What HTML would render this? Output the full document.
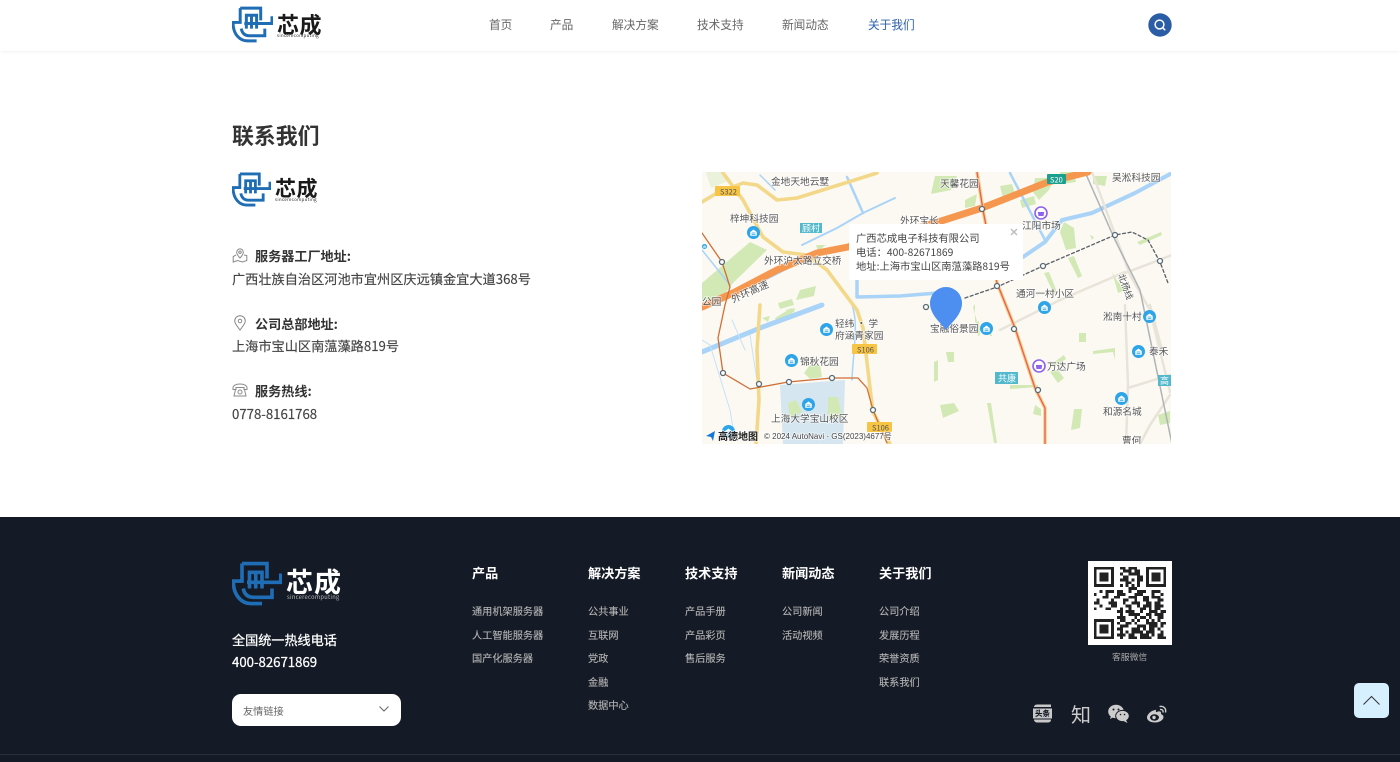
<!DOCTYPE html>
<html lang="zh"><head><meta charset="utf-8"><title>联系我们</title>
<style>
*{margin:0;padding:0;box-sizing:border-box}
html,body{width:1400px;height:762px;overflow:hidden;background:#fff;font-family:"Noto Sans CJK SC","Liberation Sans",sans-serif}
.t{position:absolute;white-space:nowrap;line-height:20px;height:20px}
svg{position:absolute;display:block}
.nav{font-size:11.67px;color:#666}
.lb{font-size:13.12px;font-weight:700;color:#333}
.tx{font-size:13.2px;color:#444;-webkit-text-stroke:.15px #444}
.h{font-size:13.12px;font-weight:700;color:#fff}
.i{font-size:10.2px;color:#b5b5b5;-webkit-text-stroke:.1px #b5b5b5}
svg text{font-family:"Noto Sans CJK SC","Liberation Sans",sans-serif}
.m text{font-size:9.7px;fill:#555;stroke:#fff;stroke-width:1.6px;paint-order:stroke;stroke-opacity:.7}
.m text.b{fill:#fff;stroke:none;font-size:9px}
</style></head><body>
<svg width="0" height="0" style="position:absolute"><defs>
<symbol id="lg" viewBox="0 0 40 36"><path d="M8 2H28V14M8 2V16H1C1 28 8 34 15 34H24M9 22C10 27 13 29 17 29H32V22M14 22V9H24V22M19 9V22M12 17H39V10" fill="none" stroke="currentColor" stroke-width="2.9"/></symbol>
<symbol id="p" viewBox="0 0 14 14"><circle cx="7" cy="7" r="7" fill="#2da5e8"/><path d="M3.5 6.5 7 3.8l3.5 2.7V10.5h-7z" fill="#fff"/><path d="M5 7.5h4M5 9h4" stroke="#2da5e8" stroke-width=".8"/></symbol>
<symbol id="q" viewBox="0 0 14 14"><circle cx="7" cy="7" r="6" fill="#fff" stroke="#8d62ec" stroke-width="1.6"/><path d="M3.8 6h6.4l-.7 4h-5z" fill="#8d62ec"/></symbol>
</defs></svg>

<!-- header -->
<div style="position:absolute;left:0;top:0;width:1400px;height:51px;background:#fff;box-shadow:0 1px 3px rgba(0,0,0,.06)"></div>
<svg style="left:232px;top:6px;color:#1f6db4" width="41" height="37"><use href="#lg"/></svg>
<div class="t" style="left:277px;top:11px;font-size:22px;font-weight:700;color:#1a1a1a;letter-spacing:.5px;line-height:26px;height:26px">芯成</div>
<div class="t" style="left:277px;top:26px;font-size:4.6px;color:#333;letter-spacing:.2px">sincerecomputing</div>
<div class="t nav" style="left:489px;top:15px">首页</div>
<div class="t nav" style="left:550px;top:15px">产品</div>
<div class="t nav" style="left:612px;top:15px">解决方案</div>
<div class="t nav" style="left:697px;top:15px">技术支持</div>
<div class="t nav" style="left:782px;top:15px">新闻动态</div>
<div class="t nav" style="left:868px;top:15px;color:#2d5fa8">关于我们</div>
<svg style="left:1148px;top:13px" width="24" height="24"><circle cx="12" cy="12" r="11.7" fill="#2b5da6"/><circle cx="11.5" cy="11.5" r="4.4" fill="none" stroke="#fff" stroke-width="1.5"/><path d="M14.8 14.8l2.4 2.4" stroke="#fff" stroke-width="1.5"/></svg>

<!-- contact -->
<div class="t" style="left:232px;top:120px;font-size:21.9px;font-weight:700;color:#333;line-height:32px;height:32px">联系我们</div>
<svg style="left:232px;top:172px;color:#1f6db4" width="39" height="35"><use href="#lg"/></svg>
<div class="t" style="left:275px;top:175px;font-size:21px;font-weight:700;color:#1a1a1a;letter-spacing:.5px;line-height:26px;height:26px">芯成</div>
<div class="t" style="left:275px;top:190px;font-size:4.6px;color:#333;letter-spacing:.2px">sincerecomputing</div>

<svg style="left:232px;top:247px" width="16" height="16" fill="none" stroke="#8a8a8a" stroke-width="1"><path d="M8 11C6 9 4.7 7.5 4.7 5.2a3.3 3.3 0 0 1 6.6 0C11.300 7.500 10 9 8 11z"/><circle cx="8" cy="5.200" r="1.200"/><path d="M4 8L1.200 9.500V15L5.500 13.500 10.500 15 14.800 13.500V8.500L12 8"/></svg>
<div class="t lb" style="left:255px;top:246px">服务器工厂地址:</div>
<div class="t tx" style="left:232px;top:269px">广西壮族自治区河池市宜州区庆远镇金宜大道368号</div>

<svg style="left:233px;top:315px" width="14" height="16" fill="none" stroke="#8a8a8a" stroke-width="1"><path d="M7 15C4 11 1.700 8.500 1.700 6a5.300 5.300 0 0 1 10.600 0C12.300 8.500 10 11 7 15z"/><circle cx="7" cy="6" r="1.800"/></svg>
<div class="t lb" style="left:255px;top:314px">公司总部地址:</div>
<div class="t tx" style="left:232px;top:336px">上海市宝山区南蕰藻路819号</div>

<svg style="left:232px;top:383px" width="16" height="14" fill="none" stroke="#8a8a8a" stroke-width="1"><path d="M1 5C1 2.500 4 1 8 1s7 1.500 7 4v1.500h-3V4.500H4v2H1zM3.500 6.500 2 13h12l-1.500-6.500"/><circle cx="8" cy="9" r="2"/></svg>
<div class="t lb" style="left:255px;top:381px">服务热线:</div>
<div class="t tx" style="left:232px;top:404px">0778-8161768</div>

<!-- map -->
<svg class="m" style="left:702px;top:172px" width="469" height="272" viewBox="702 172 469 272">
<rect x="702" y="172" width="469" height="272" fill="#fcf9f3"/>
<path d="M780 385 845 380 843 444H783z" fill="#d5e6f0"/>
<g fill="#d2e9b6">
<path d="M702 283 750 242 767 250 733 283 720 300H702z"/><path d="M705 170h18l8 10-20 8z" opacity=".4"/>
<path d="M775 318l16-10 2 8-16 8zM778 303l14-4 2 6-14 4zM785 310l10-2-1 5z"/>
<path d="M810 365h10l2 12-12 2-6-6z"/><path d="M788 403l8-3 6 12-12 6zM828 397h10l4 20-14 2z"/>
<path d="M935 176h22l-6 14-20 4zM965 200l12-6-2 12-10 2zM1000 186l12-2 3 10-12 4zM1020 200l14-4 2 8-14 4zM1035 178h20l-6 12-10 10-6-8zM1060 172h14l2 10-14 2zM1093 176h14l-2 10-12-2z"/>
<path d="M1064 222l10 6 2 20-10 2-6-18zM1068 258l6-2 8 20-4 2zM1090 235l4 2-2 3z"/>
<path d="M1137 242l24-10 1 3-22 10zM1112 272l6 10 8 8-8 3zM1158 415l12-4v12l-10 2z"/>
<path d="M1044 273l5-1 8 20-3 2zM975 304l-2 3 4 14-2 2zM976 322l3-1 1 14-2 1zM985 322l3 0 4 14-2 0zM1079 333h7v9h-7zM1050 365l14-10 2 4-12 8zM1050 372l8-2 6 8-6 5zM1010 385h28v2l-28 2zM1093 351l22-3v12l-2-8-20 2zM938 360l-4 2 0 20 4-2zM946 352h8v10h-6zM940 405l14-2 5 8-16 7zM987 403l4 0 6 40-3 0zM1035 405l6 4 0 7-8-2zM1074 409h8l-2 19-9 2zM816 245l10 0-8 6zM800 290l16-4-2 10-18 4zM762 318l8-2-2 6z" />
</g>
<g fill="none" stroke="#a9d3f7" stroke-linecap="round" stroke-linejoin="round">
<path d="M702 352 760 328 822 305" stroke-width="5"/>
<path d="M1023 257 1045 242 1062 220 1092 213 1135 193 1172 173" stroke-width="4"/>
<path d="M1010 173 1045 240M847 177 863 213" stroke-width="2.500"/>
<path d="M802 245 837 228 863 213 880 205 895 198" stroke-width="2"/>
<path d="M857 280V297L900 296 950 292" stroke-width="3.500"/>
<path d="M850 300C860 320 853 350 852 380M775 190 760 175M702 250 730 285M745 290 795 265" stroke-width="1.500"/>
<path d="M702 340 710 345 730 410 735 440M750 335 760 400M732 320 745 350" stroke-width="1" stroke="#c6e1fa"/>
</g>
<g fill="none" stroke-linecap="round" stroke-linejoin="round">
<path d="M1092 172 1130 275 1150 310 1170 392M1120 275 1172 255M1000 330 1060 300 1125 272M1125 305 1128 385 1126 444M1128 388 1170 375M1170 395 1150 425 1140 444M1150 305 1162 350" stroke="#e8e4da" stroke-width="2.500"/>
<path d="M1085 172 1115 240 1140 290 1172 444" stroke="#aeb3b6" stroke-width="1.500" stroke-dasharray="9 1"/>
<path d="M723 173 743 200 763 237 783 252 807 255 827 270 857 310 863 328 870 388 873 412 890 444M702 202 717 193 743 183 757 185 777 200 797 198 877 173M760 305 757 350 759 400 756 444" stroke="#f3d88a" stroke-width="3.600"/>
<path d="M702 307 733 293 777 270 817 253 848 247 935 223 982 208 1048 182 1088 172" stroke="#f6974f" stroke-width="7"/>
<path d="M977 172 983 210 997 283 1015 328 1035 388 1045 408V444" stroke="#f3d27a" stroke-width="3.500"/>
<path d="M977 172 983 210 997 283 1015 328 1035 388 1045 408V444" stroke="#ea5a6a" stroke-width="1.300"/>
<path d="M702 233 722 262 730 287 725 305 718 338 723 373 750 389 788 382 832 378 858 378 867 388 873 410 887 443" stroke="#cf6f36" stroke-width="1.300"/>
<path d="M965 298 997 287 1043 266 1115 235 1132 232 1148 240 1160 262 1168 283" stroke="#596066" stroke-width="1.300" stroke-dasharray="3 2.500"/>
</g>
<g fill="#fff" stroke="#596a74" stroke-width="1.300">
<circle cx="722" cy="262" r="2.500"/><circle cx="723" cy="373" r="2.500"/><circle cx="759" cy="384" r="2.500"/><circle cx="789" cy="382" r="2.500"/><circle cx="832" cy="378" r="2.500"/><circle cx="873" cy="410" r="2.500"/><circle cx="926" cy="307" r="2.500"/><circle cx="982" cy="209" r="2.500"/><circle cx="997" cy="286" r="2.500"/><circle cx="1043" cy="266" r="2.500"/><circle cx="1115" cy="235" r="2.500"/><circle cx="1160" cy="261" r="2.500"/><circle cx="1014" cy="329" r="2.500"/><circle cx="1038" cy="390" r="2.500"/>
</g>
<use href="#p" x="747" y="226" width="13" height="13"/><use href="#p" x="820" y="323" width="13" height="13"/><use href="#p" x="785" y="354" width="13" height="13"/><use href="#p" x="802" y="398" width="13" height="13"/><use href="#p" x="980" y="322" width="13" height="13"/><use href="#p" x="1038" y="301" width="13" height="13"/><use href="#p" x="1143" y="310" width="13" height="13"/><use href="#p" x="1132" y="345" width="13" height="13"/><use href="#p" x="1115" y="392" width="13" height="13"/><use href="#p" x="722" y="425" width="13" height="13"/><use href="#p" x="702" y="240" width="5" height="13"/>
<use href="#q" x="1034" y="206" width="14" height="14"/><use href="#q" x="1032" y="359" width="14" height="14"/>
<text x="771" y="185">金地天地云墅</text><text x="730" y="222">梓坤科技园</text><text x="764" y="264">外环沪太路立交桥</text>
<text x="0" y="0" transform="translate(733 303) rotate(-24)" style="font-size:10px">外环高速</text>
<text x="702" y="305">公园</text><text x="835" y="327">轻纬 · 学</text><text x="835" y="339">府涵青家园</text><text x="800" y="365">锦秋花园</text><text x="771" y="422">上海大学宝山校区</text>
<text x="940" y="187">天馨花园</text><text x="1112" y="181">吴淞科技园</text><text x="1022" y="229">江阳市场</text><text x="1016" y="297">通河一村小区</text><text x="1103" y="320">淞南十村</text><text x="1149" y="355">泰禾</text><text x="1047" y="370">万达广场</text><text x="1103" y="415">和源名城</text><text x="930" y="332">宝融俗景园</text><text x="1122" y="444">曹何</text><text x="900" y="224">外环宝长</text>
<text x="0" y="0" transform="translate(1118 275) rotate(70)" style="font-size:9px">北杨线</text>
<rect x="715" y="186" width="25" height="10" rx="1" fill="#f7c444"/><text x="720" y="194.500" style="font-size:7.500px;fill:#555;stroke:none">S322</text>
<rect x="852" y="344" width="25" height="10" rx="1" fill="#f7c444"/><text x="857" y="352.500" style="font-size:7.500px;fill:#555;stroke:none">S106</text>
<rect x="867" y="422" width="25" height="10" rx="1" fill="#f7c444"/><text x="872" y="430.500" style="font-size:7.500px;fill:#555;stroke:none">S106</text>
<rect x="1047" y="174" width="19" height="10" rx="1" fill="#1ba08d"/><text x="1050" y="182.500" class="b" style="font-size:7.500px">S20</text>
<rect x="800" y="223" width="22" height="10" fill="#52b8cc"/><text x="802" y="231.500" class="b">顾村</text>
<rect x="995" y="372" width="23" height="12" fill="#52b8cc"/><text x="998" y="381.500" class="b">共康</text>
<rect x="1158" y="375" width="13" height="11" fill="#52b8cc"/><text x="1160" y="384" class="b">高</text>
<path d="M706 436l9-5-2 10-2-4z" fill="#1677d8"/>
<text x="718" y="440" style="font-size:10px;font-weight:700;fill:#222">高德地图</text>
<text x="764" y="439" style="font-size:8px;fill:#444;font-family:'Liberation Sans',sans-serif">© 2024 AutoNavi - GS(2023)4677号</text>
<rect x="849" y="224" width="174" height="56" fill="#fff"/>
<text x="856" y="242" style="font-size:10.300px;fill:#444;stroke:none">广西芯成电子科技有限公司</text>
<text x="856" y="256" style="font-size:10.300px;fill:#444;stroke:none">电话：400-82671869</text>
<text x="856" y="270" style="font-size:10.300px;fill:#444;stroke:none">地址:上海市宝山区南蕰藻路819号</text>
<path d="M1011 229l6 6m0-6l-6 6" stroke="#bbb" stroke-width="1.400"/>
<path d="M946 330 C941 323 930 315 930 303a16 16 0 0 1 32 0C962 315 951 323 946 330z" fill="#4c8ff0"/>
</svg>

<!-- footer -->
<div style="position:absolute;left:0;top:517px;width:1400px;height:245px;background:#151b26"></div>
<div style="position:absolute;left:0;top:754px;width:1400px;height:1px;background:#2a303a"></div>
<svg style="left:232px;top:561px;color:#1f6db4" width="50" height="45"><use href="#lg"/></svg>
<div class="t" style="left:286px;top:563px;font-size:27px;font-weight:700;color:#fff;letter-spacing:1px;line-height:36px;height:36px">芯成</div>
<div class="t" style="left:287px;top:587px;font-size:5.700px;color:#bbb;letter-spacing:.3px">sincerecomputing</div>
<div class="t" style="left:232px;top:630px;font-size:13.120px;color:#fff;-webkit-text-stroke:.25px #fff">全国统一热线电话</div>
<div class="t" style="left:232px;top:652px;font-size:13.200px;color:#fff;-webkit-text-stroke:.25px #fff">400-82671869</div>
<div style="position:absolute;left:232px;top:694px;width:169px;height:32px;background:#fff;border-radius:9px"></div>
<div class="t i" style="left:243px;top:701px;color:#666;-webkit-text-stroke:0">友情链接</div>
<svg style="left:378px;top:705px" width="12" height="8"><path d="M1.500 1.500 6 6l4.500-4.500" fill="none" stroke="#666" stroke-width="1"/></svg>

<div class="t h" style="left:472px;top:563px">产品</div>
<div class="t i" style="left:472px;top:601px">通用机架服务器</div><div class="t i" style="left:472px;top:625px">人工智能服务器</div><div class="t i" style="left:472px;top:648px">国产化服务器</div>
<div class="t h" style="left:588px;top:563px">解决方案</div>
<div class="t i" style="left:588px;top:601px">公共事业</div><div class="t i" style="left:588px;top:625px">互联网</div><div class="t i" style="left:588px;top:648px">党政</div><div class="t i" style="left:588px;top:672px">金融</div><div class="t i" style="left:588px;top:695px">数据中心</div>
<div class="t h" style="left:685px;top:563px">技术支持</div>
<div class="t i" style="left:685px;top:601px">产品手册</div><div class="t i" style="left:685px;top:625px">产品彩页</div><div class="t i" style="left:685px;top:648px">售后服务</div>
<div class="t h" style="left:782px;top:563px">新闻动态</div>
<div class="t i" style="left:782px;top:601px">公司新闻</div><div class="t i" style="left:782px;top:625px">活动视频</div>
<div class="t h" style="left:879px;top:563px">关于我们</div>
<div class="t i" style="left:879px;top:601px">公司介绍</div><div class="t i" style="left:879px;top:625px">发展历程</div><div class="t i" style="left:879px;top:648px">荣誉资质</div><div class="t i" style="left:879px;top:672px">联系我们</div>

<svg style="left:1088px;top:561px" width="84" height="84" viewBox="-2 -2 29 29" shape-rendering="crispEdges">
<rect x="-2" y="-2" width="29" height="29" fill="#fff"/>
<g fill="none" stroke="#222"><path d="M.5 .5h6v6h-6zM18.500 .5h6v6h-6zM.5 18.500h6v6h-6z"/></g>
<path d="M2 2h3v3h-3zM20 2h3v3h-3zM2 20h3v3h-3z" fill="#222"/>
<path stroke="#222" fill="none" d="M9 .5h2m1 0h3M10 1.500h3m1 0h2M9 2.500h1m2 0h4M10 3.500h2m3 0h2M9 4.500h3m1 0h1m1 0h2M11 5.500h2m2 0h1M9 6.500h1m1 0h1m1 0h1m1 0h1M12 7.500h3M2 8.500h1m1 0h3m1 0h2m2 0h1m2 0h3m2 0h3M0 9.500h1m3 0h1m3 0h3m3 0h3m3 0h1m2 0h1M3 10.500h2m2 0h2m3 0h3m2 0h2m1 0h3M1 11.500h1m4 0h1m3 0h2m2 0h1m2 0h2m3 0h2M0 12.500h2m3 0h3m2 0h1m2 0h3m2 0h2m1 0h2M2 13.500h1m3 0h2m3 0h2m2 0h1m1 0h3m1 0h3M0 14.500h1m3 0h2m3 0h1m2 0h1m3 0h2m1 0h1m1 0h2M8 15.500h2m1 0h3m2 0h1m2 0h3m1 0h2M9 16.500h1m2 0h4m2 0h2m1 0h3M8 17.500h3m3 0h1m1 0h2m1 0h1m2 0h2M9 18.500h2m2 0h1m1 0h1m2 0h1m1 0h1m1 0h1M8 19.500h1m2 0h2m1 0h1m3 0h4m1 0h2M9 20.500h3m3 0h3m1 0h3m1 0h1M8 21.500h2m3 0h3m1 0h1m1 0h2m1 0h1M9 22.500h1m1 0h1m1 0h4m1 0h3m2 0h1M8 23.500h3m1 0h2m2 0h3m1 0h1m1 0h2M9 24.500h1m2 0h3m1 0h4m2 0h3"/>
</svg>
<div class="t" style="left:1112px;top:647px;font-size:8.800px;color:#aaa">客服微信</div>

<svg style="left:1032px;top:703px" width="21" height="21"><path d="M2 4.500C2 2 3.500 1.500 6 1.500H19V4H2zM2 16.500H19C19 19 17.500 19.500 15 19.500H6C3.500 19.500 2 18.500 2 16.500z" fill="#c8c8c8"/><rect x="1" y="5.500" width="19" height="10" fill="#c8c8c8"/></svg>
<div class="t" style="left:1033px;top:704px;width:19px;text-align:center;font-size:7.500px;font-weight:900;color:#151b26">头条</div>
<div class="t" style="left:1071px;top:701px;font-size:20px;color:#ccc;line-height:26px;height:26px">知</div>
<svg style="left:1108px;top:704px" width="22" height="20"><ellipse cx="8" cy="7.500" rx="7.800" ry="6.800" fill="#ccc"/><path d="M3 12l-1 3 4-2z" fill="#ccc"/><ellipse cx="14.500" cy="12" rx="6.800" ry="5.600" fill="#ccc" stroke="#151b26" stroke-width="1"/><path d="M18 16l1.500 3-4-2z" fill="#ccc"/><circle cx="5.500" cy="5.500" r="1" fill="#151b26"/><circle cx="10.500" cy="5.500" r="1" fill="#151b26"/><circle cx="12.500" cy="10.500" r=".8" fill="#151b26"/><circle cx="16.500" cy="10.500" r=".8" fill="#151b26"/></svg>
<svg style="left:1146px;top:704px" width="22" height="20"><path d="M9 6C4.500 7 1 10.500 1 13.500c0 3 3.500 5 8 5s8.500-2.500 8.500-5.500c0-2-2-2.500-2.500-3 .6-2-.6-3-3-2.500l-2 .7C9.800 7 10.500 5.500 9 6z" fill="#ccc"/><ellipse cx="8.500" cy="13.500" rx="4.500" ry="3.200" fill="#151b26"/><circle cx="8" cy="13.500" r="1.700" fill="#ccc"/><path d="M13.500 2.500c4-1 7 2 6 6M14 5.500c2-.5 3.500 1 3 3" fill="none" stroke="#ccc" stroke-width="1.400"/></svg>

<div style="position:absolute;left:1354px;top:683px;width:35px;height:35px;background:#d6f0ff;border-radius:5px"></div>
<svg style="left:1362px;top:695px" width="19" height="11"><path d="M1.500 9.500 9.500 1.500l8 8" fill="none" stroke="#333" stroke-width="1"/></svg>
</body></html>
